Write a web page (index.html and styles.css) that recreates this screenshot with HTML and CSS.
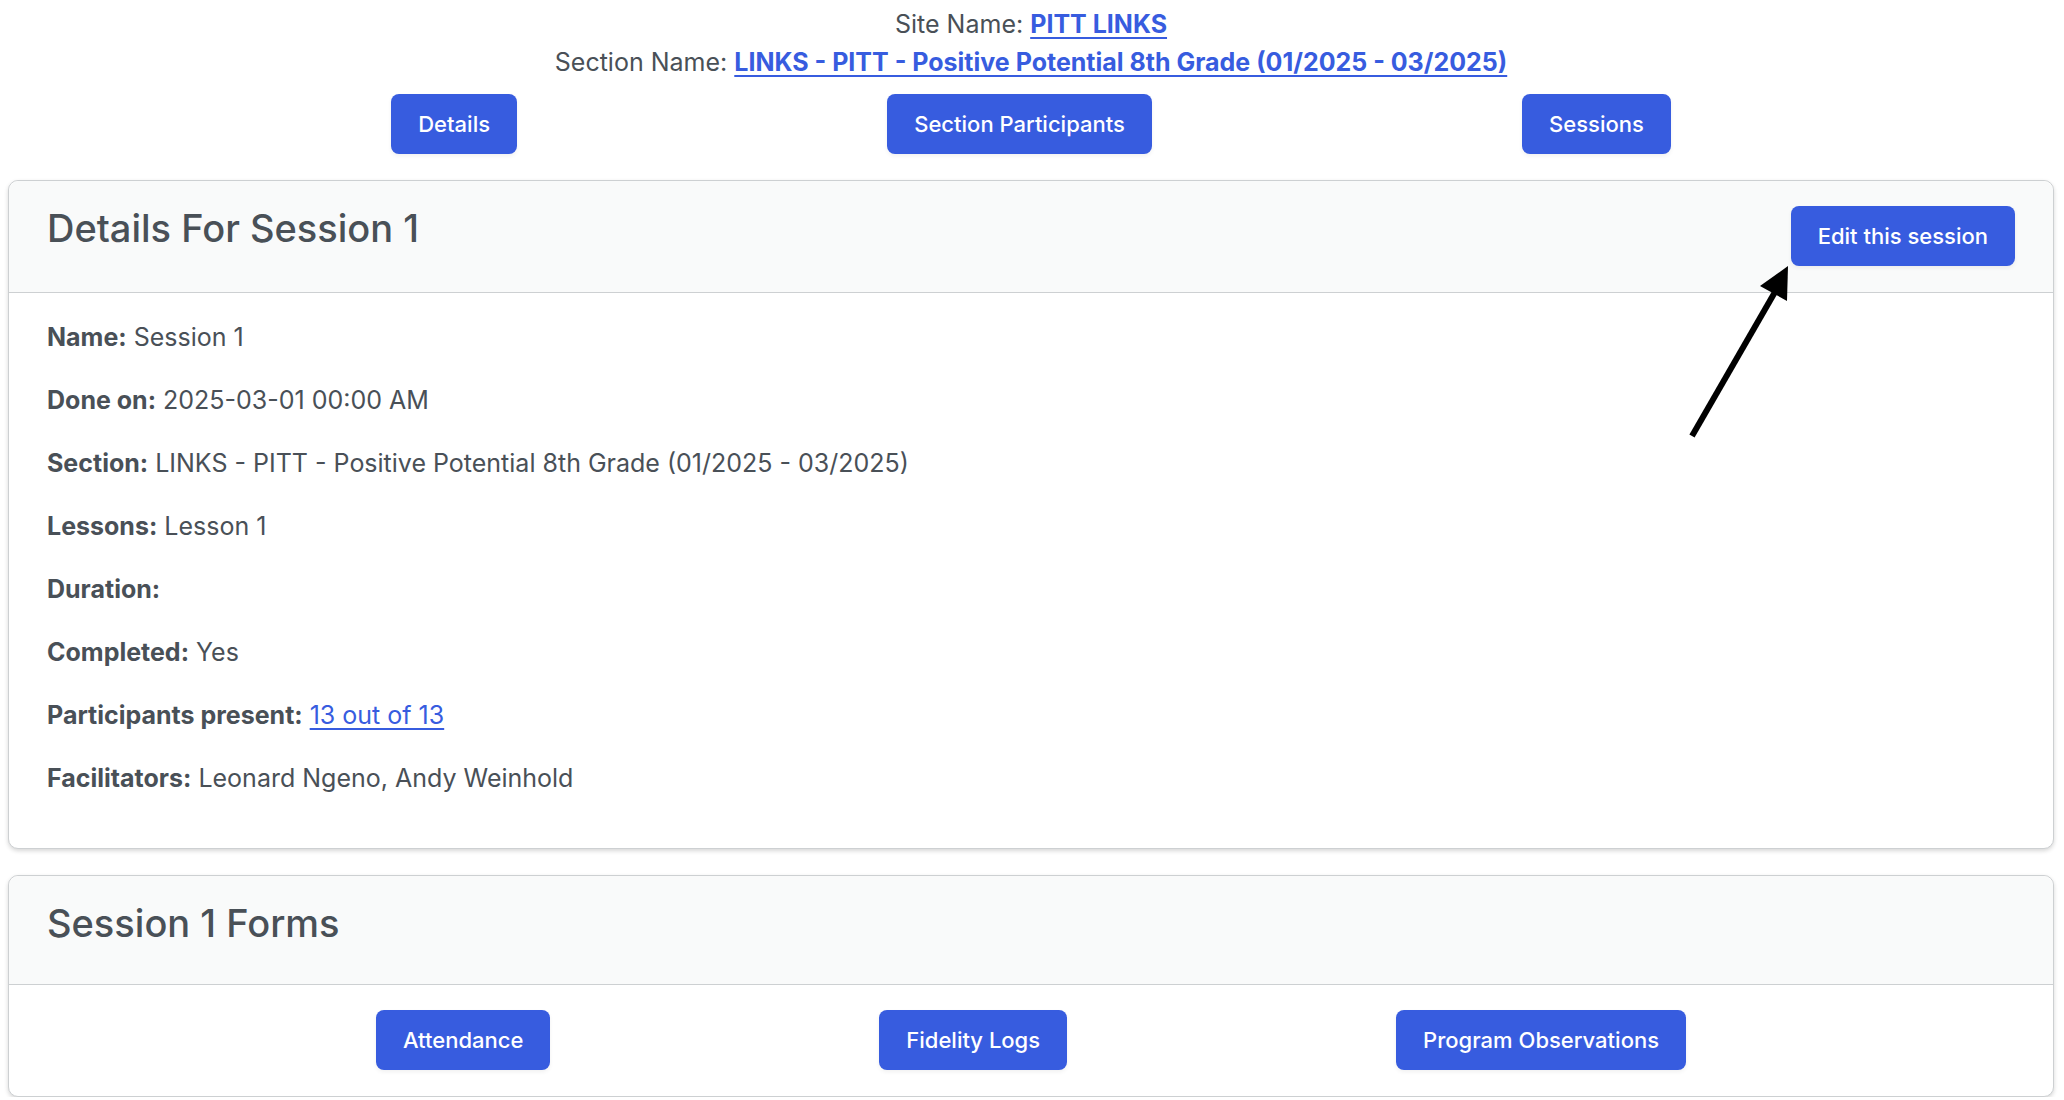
FILE: index.html
```html
<!DOCTYPE html>
<html lang="en">
<head>
<meta charset="utf-8">
<meta name="viewport" content="width=device-width, initial-scale=1">
<title>Session 1</title>
<link rel="stylesheet" href="styles.css">
</head>
<body>
<header class="context">
  <p>Site Name: <a href="#">PITT LINKS</a></p>
  <p>Section Name: <a href="#">LINKS - PITT - Positive Potential 8th Grade (01/2025 - 03/2025)</a></p>
</header>
<nav class="button-row">
  <button class="btn" type="button">Details</button>
  <button class="btn" type="button">Section Participants</button>
  <button class="btn" type="button">Sessions</button>
</nav>
<main>
  <section class="card">
    <div class="card-header">
      <h1>Details For Session 1</h1>
      <div class="edit">
        <button class="btn" type="button">Edit this session</button>
        <svg class="arrow" width="104" height="174" viewBox="0 0 104 174" aria-hidden="true">
          <path d="M5 170 88 26" stroke="#000" stroke-width="6" fill="none"/>
          <path d="M101 0 100 35 73 20Z" fill="#000"/>
        </svg>
      </div>
    </div>
    <div class="card-body">
      <p><b>Name:</b> Session 1</p>
      <p><b>Done on:</b> 2025-03-01 00:00 AM</p>
      <p><b>Section:</b> LINKS - PITT - Positive Potential 8th Grade (01/2025 - 03/2025)</p>
      <p><b>Lessons:</b> Lesson 1</p>
      <p><b>Duration:</b></p>
      <p><b>Completed:</b> Yes</p>
      <p><b>Participants present:</b> <a href="#">13 out of 13</a></p>
      <p><b>Facilitators:</b> Leonard Ngeno, Andy Weinhold</p>
    </div>
  </section>
  <section class="card">
    <div class="card-header">
      <h1>Session 1 Forms</h1>
    </div>
    <div class="button-row forms">
      <button class="btn" type="button">Attendance</button>
      <button class="btn" type="button">Fidelity Logs</button>
      <button class="btn" type="button">Program Observations</button>
    </div>
  </section>
</main>
</body>
</html>
```
FILE: styles.css
```css
* { box-sizing: border-box; }
body {
  margin: 0;
  padding: 5px 10px 0 8px;
  background: #fff;
  color: #495057;
  font-family: Inter, "Liberation Sans", sans-serif;
  font-size: 25px;
  line-height: 38px;
}
p, h1 { margin: 0; }
a {
  color: #375cdf;
  text-decoration-thickness: 2px;
  text-underline-offset: 4px;
  text-decoration-skip-ink: none;
}
b { font-weight: 700; }
.context { text-align: center; }
.context a { font-weight: 700; }
.button-row {
  display: flex;
  justify-content: space-evenly;
  padding: 13px 13px 0;
}
.btn {
  height: 60px;
  padding: 0 27px;
  border: 0;
  border-radius: 8px;
  background: #375cdf;
  box-shadow: 0 2px 4px rgba(0, 0, 0, 0.06);
  color: #fff;
  font: 500 22px/60px Inter, "Liberation Sans", sans-serif;
}
.card {
  margin-top: 26px;
  border: 1px solid #cdd0d2;
  border-radius: 10px;
  background: #fff;
  box-shadow: 0 2px 4px rgba(0, 0, 0, 0.16);
}
.card-header {
  display: flex;
  justify-content: space-between;
  align-items: flex-start;
  min-height: 109px;
  padding: 25px 38px 26px;
  border-bottom: 1px solid #cdd0d2;
  border-radius: 10px 10px 0 0;
  background: #f9fafa;
}
h1 { font-size: 38px; font-weight: 500; line-height: 44px; }
.edit { position: relative; }
.arrow { position: absolute; right: 100%; top: 100%; }
.card-body { padding: 25px 38px 51px; }
.card-body p + p { margin-top: 25px; }
.forms { padding: 25px 38px 26px; }
```
